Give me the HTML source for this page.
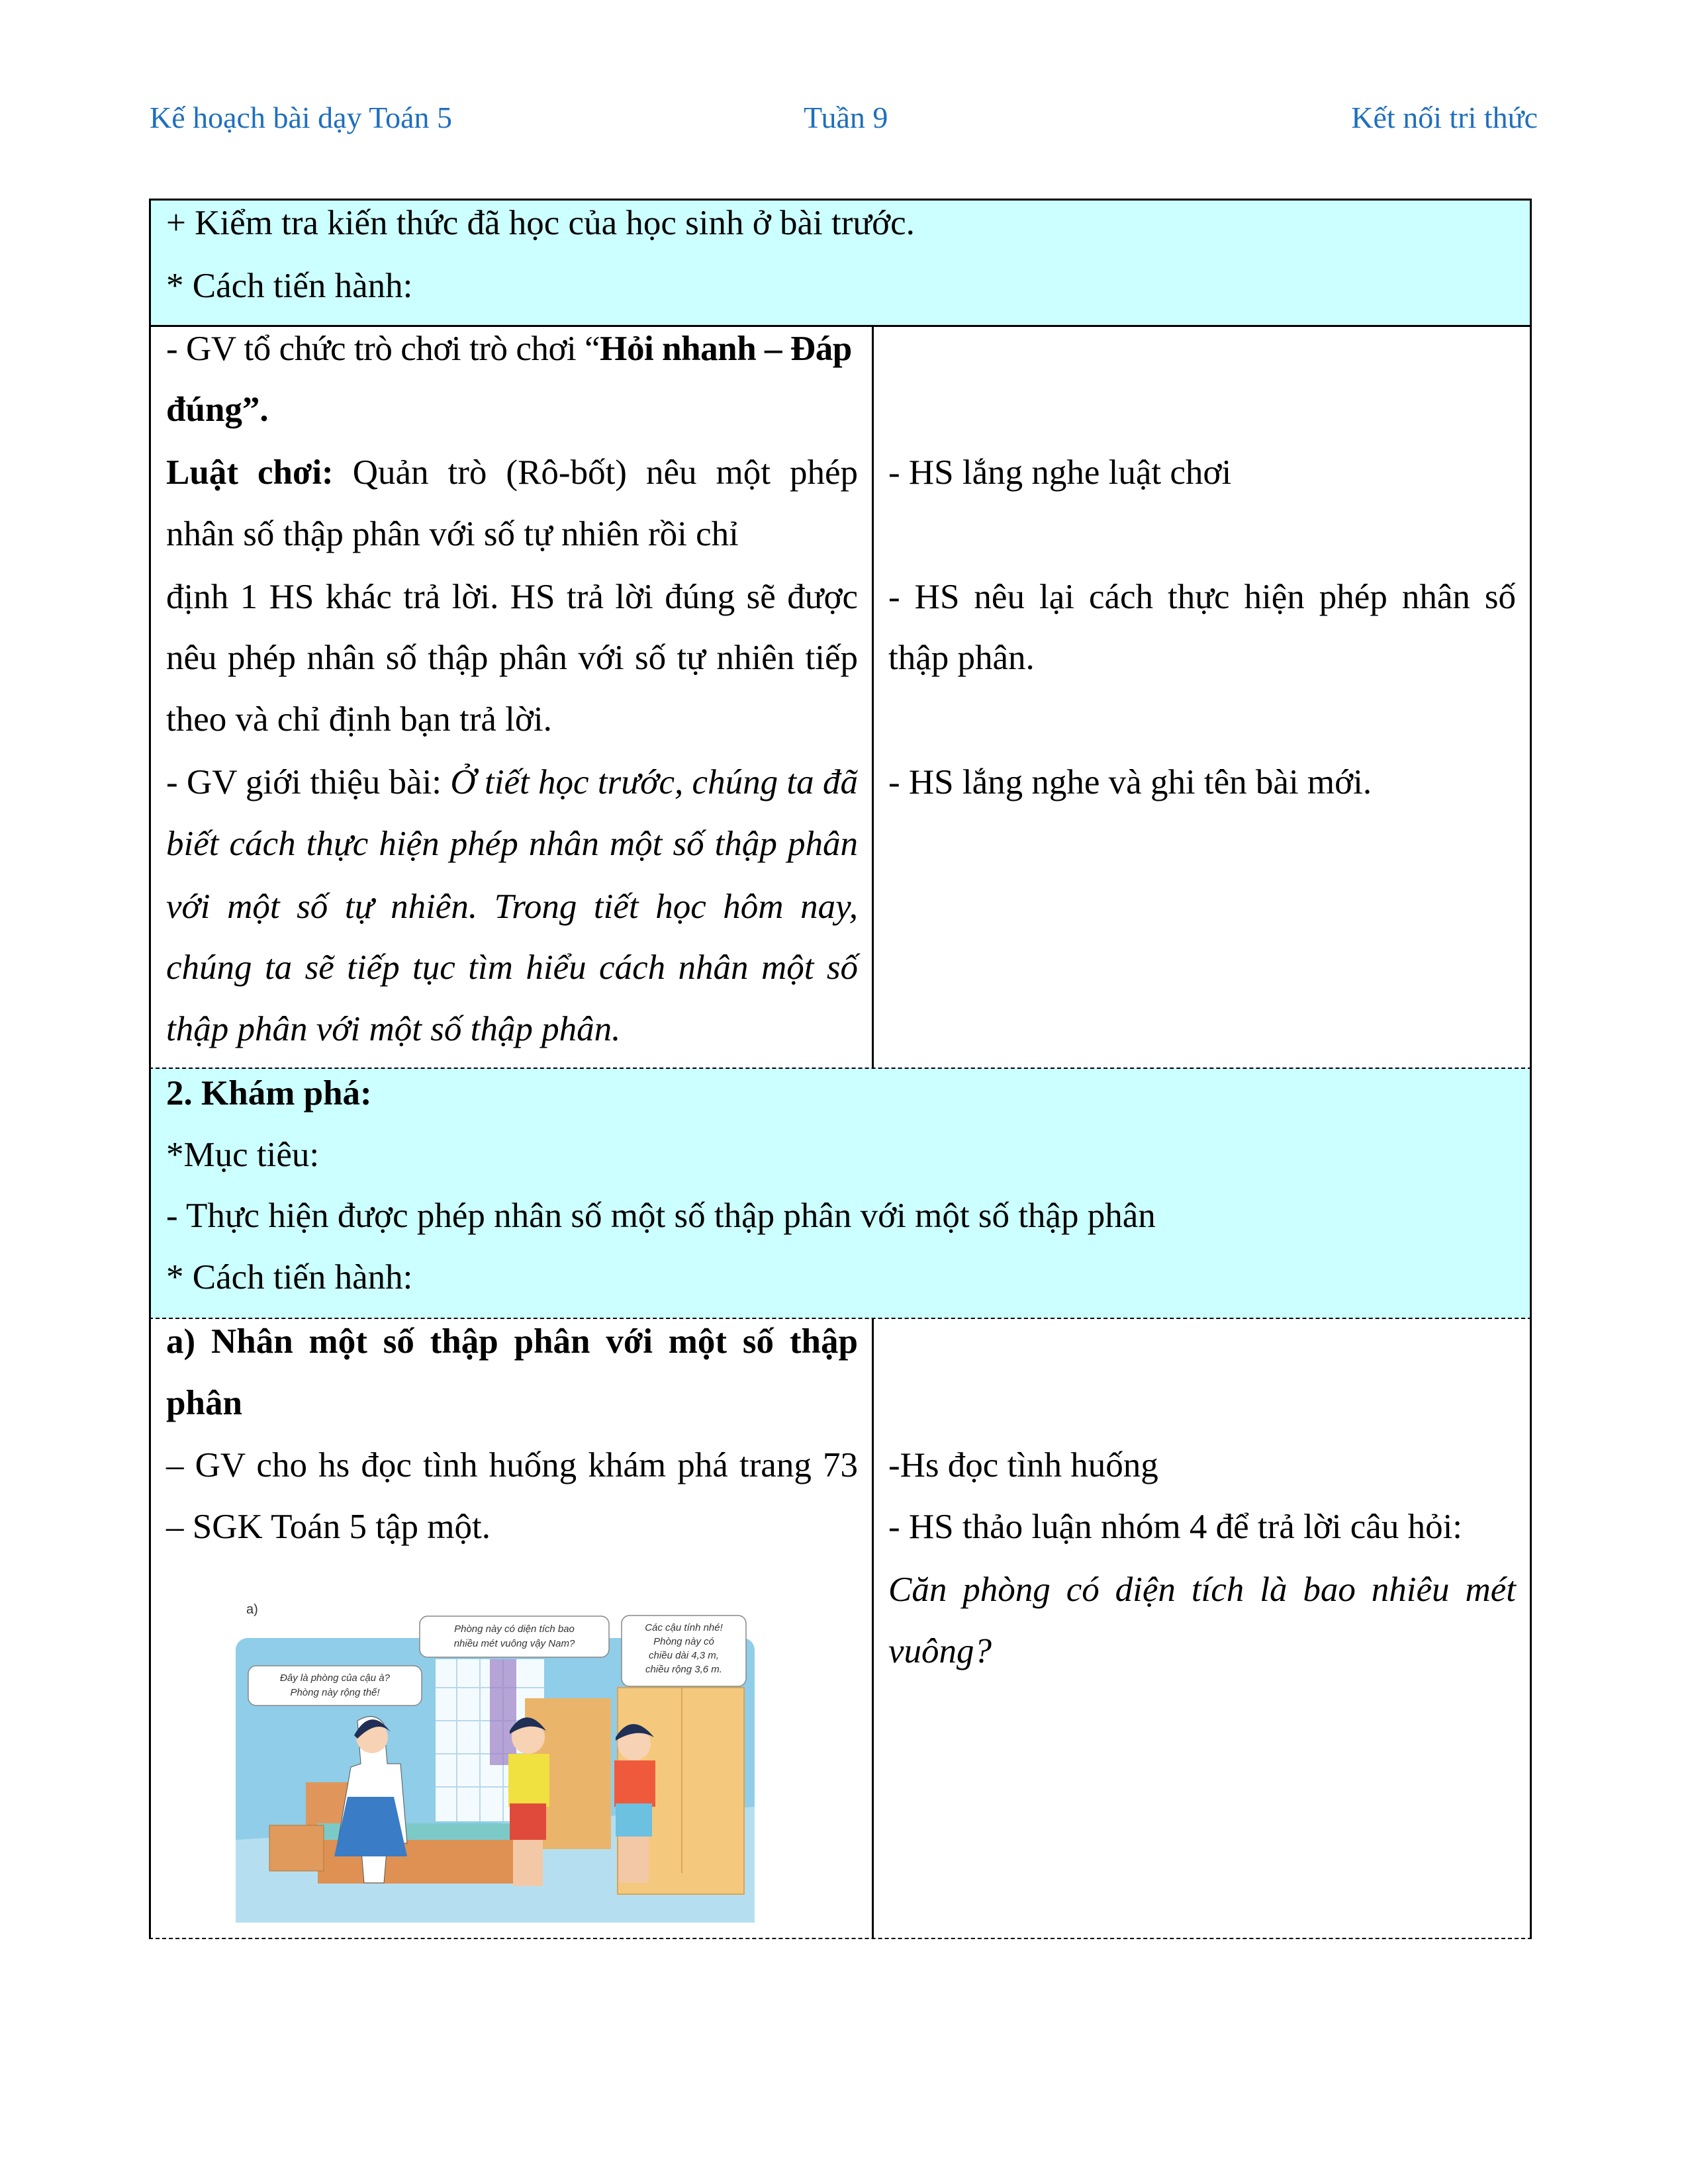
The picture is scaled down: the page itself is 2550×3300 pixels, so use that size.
<!DOCTYPE html>
<html><head><meta charset="utf-8">
<style>
html,body{margin:0;padding:0;background:#fff;}
body{width:2550px;height:3300px;position:relative;overflow:hidden;font-family:"Liberation Serif","Noto Serif CJK SC",serif;color:#000;}
.h{position:absolute;top:148px;font-size:46px;color:#1f6fbd;line-height:60px;white-space:nowrap;}
.bg{position:absolute;background:#ccffff;}
.hl{position:absolute;height:0;}
.vl{position:absolute;width:3px;background:#000;}
.l{position:absolute;font-size:53px;line-height:94px;height:94px;white-space:nowrap;}
.j{text-align:justify;text-align-last:justify;white-space:normal;}
.L{left:251px;width:1045px;}
.R{left:1342px;width:948px;}
b{font-weight:bold;}
</style></head><body>
<div class="h" style="left:226px">Kế hoạch bài dạy Toán 5</div>
<div class="h" style="left:1214px">Tuần 9</div>
<div class="h" style="right:227px">Kết nối tri thức</div>

<div class="bg" style="left:226px;top:301px;width:2086px;height:191px"></div>
<div class="bg" style="left:226px;top:1614px;width:2086px;height:378px"></div>

<div class="hl" style="left:225px;top:300px;width:2089px;border-top:3px solid #000"></div>
<div class="hl" style="left:225px;top:491px;width:2089px;border-top:3px solid #000"></div>
<div class="hl" style="left:225px;top:1613px;width:2089px;border-top:2px dashed #000"></div>
<div class="hl" style="left:225px;top:1991px;width:2089px;border-top:2px dashed #000"></div>
<div class="hl" style="left:225px;top:2928px;width:2089px;border-top:2px dashed #000"></div>
<div class="vl" style="left:225px;top:300px;height:2630px"></div>
<div class="vl" style="left:2311px;top:300px;height:2630px"></div>
<div class="vl" style="left:1317px;top:492px;height:1122px"></div>
<div class="vl" style="left:1317px;top:1992px;height:938px"></div>

<div class="l L" style="top:290px">+ Kiểm tra kiến thức đã học của học sinh ở bài trước.</div>
<div class="l L" style="top:385px">* Cách tiến hành:</div>
<div class="l L" style="top:480px;letter-spacing:-0.45px">- GV tổ chức trò chơi trò chơi “<b>Hỏi nhanh – Đáp</b></div>
<div class="l L" style="top:572px"><b>đúng”.</b></div>
<div class="l L j" style="top:667px"><b>Luật chơi:</b> Quản trò (Rô-bốt) nêu một phép</div>
<div class="l L" style="top:760px">nhân số thập phân với số tự nhiên rồi chỉ</div>
<div class="l L j" style="top:855px">định 1 HS khác trả lời. HS trả lời đúng sẽ được</div>
<div class="l L j" style="top:947px">nêu phép nhân số thập phân với số tự nhiên tiếp</div>
<div class="l L" style="top:1040px">theo và chỉ định bạn trả lời.</div>
<div class="l L j" style="top:1135px">- GV giới thiệu bài: <i>Ở tiết học trước, chúng ta đã</i></div>
<div class="l L j" style="top:1228px"><i>biết cách thực hiện phép nhân một số thập phân</i></div>
<div class="l L j" style="top:1323px"><i>với một số tự nhiên. Trong tiết học hôm nay,</i></div>
<div class="l L j" style="top:1415px"><i>chúng ta sẽ tiếp tục tìm hiểu cách nhân một số</i></div>
<div class="l L" style="top:1508px"><i>thập phân với một số thập phân.</i></div>

<div class="l R" style="top:667px">- HS lắng nghe luật chơi</div>
<div class="l R j" style="top:855px">- HS nêu lại cách thực hiện phép nhân số</div>
<div class="l R" style="top:947px">thập phân.</div>
<div class="l R" style="top:1135px">- HS lắng nghe và ghi tên bài mới.</div>

<div class="l L" style="top:1605px"><b>2. Khám phá:</b></div>
<div class="l L" style="top:1698px">*Mục tiêu:</div>
<div class="l L" style="top:1790px">- Thực hiện được phép nhân số một số thập phân với một số thập phân</div>
<div class="l L" style="top:1883px">* Cách tiến hành:</div>

<div class="l L j" style="top:1980px"><b>a) Nhân một số thập phân với một số thập</b></div>
<div class="l L" style="top:2073px"><b>phân</b></div>
<div class="l L j" style="top:2167px">– GV cho hs đọc tình huống khám phá trang 73</div>
<div class="l L" style="top:2260px">– SGK Toán 5 tập một.</div>

<div class="l R" style="top:2167px">-Hs đọc tình huống</div>
<div class="l R" style="top:2260px">- HS thảo luận nhóm 4 để trả lời câu hỏi:</div>
<div class="l R j" style="top:2355px"><i>Căn phòng có diện tích là bao nhiêu mét</i></div>
<div class="l R" style="top:2448px"><i>vuông?</i></div>

<svg style="position:absolute;left:330px;top:2400px" width="830" height="510" viewBox="0 0 830 510" preserveAspectRatio="none">
<rect x="26" y="75" width="784" height="430" rx="18" fill="#8fcde8"/>
<polygon points="26,380 810,330 810,505 26,505" fill="#b5dff0"/>
<text x="42" y="38" font-family="Liberation Sans,sans-serif" font-size="20" fill="#333">a)</text>
<rect x="328" y="107" width="164" height="245" fill="#f4fbff"/>
<g stroke="#b8d8ea" stroke-width="2"><line x1="360" y1="107" x2="360" y2="352"/><line x1="395" y1="107" x2="395" y2="352"/><line x1="430" y1="107" x2="430" y2="352"/><line x1="328" y1="150" x2="492" y2="150"/><line x1="328" y1="200" x2="492" y2="200"/><line x1="328" y1="250" x2="492" y2="250"/><line x1="328" y1="300" x2="492" y2="300"/></g>
<rect x="410" y="107" width="40" height="160" fill="#9b7fc4" opacity="0.7"/>
<rect x="463" y="166" width="130" height="228" fill="#eab46b"/>
<rect x="603" y="150" width="191" height="312" fill="#f5c97d" stroke="#d9a557" stroke-width="2"/>
<line x1="700" y1="150" x2="700" y2="430" stroke="#d9a557" stroke-width="2"/>
<rect x="132" y="293" width="120" height="70" fill="#e0965a"/>
<polygon points="150,355 440,355 445,380 135,395" fill="#7ccac8"/>
<rect x="150" y="380" width="295" height="66" fill="#de9152"/>
<rect x="77" y="358" width="82" height="69" fill="#e09a5c" stroke="#b8733a"/>
<path d="M210 200 q25 -15 40 5 l5 60 l20 0 l10 120 l-30 0 l-5 60 l-30 0 l-5 -60 l-35 0 l20 -115 l15 -5 z" fill="#fff" stroke="#555"/>
<path d="M195 315 l70 0 l20 90 l-110 0 z" fill="#3a7cc6"/>
<circle cx="232" cy="225" r="24" fill="#f7d2b4"/><path d="M205 222 q25 -45 55 -5 q-20 -20 -50 10 z" fill="#1f2f55"/>
<circle cx="468" cy="225" r="25" fill="#f7d2b4"/><path d="M440 215 q25 -40 55 0 q-25 -15 -55 5z" fill="#1f2f55"/>
<rect x="438" y="250" width="62" height="80" fill="#f0e040"/>
<rect x="440" y="325" width="55" height="55" fill="#e04a3a"/>
<rect x="445" y="380" width="45" height="70" fill="#f3c8a6"/>
<circle cx="628" cy="235" r="25" fill="#f7d2b4"/><path d="M600 225 q25 -40 58 0 q-25 -15 -58 5z" fill="#1f2f55"/>
<rect x="598" y="260" width="62" height="70" fill="#f05a3c"/>
<rect x="600" y="325" width="55" height="50" fill="#6cc0e0"/>
<rect x="605" y="375" width="45" height="70" fill="#f3c8a6"/>
<g fill="#fff" stroke="#888" stroke-width="1.5">
<rect x="45" y="117" width="262" height="60" rx="12"/>
<rect x="304" y="42" width="286" height="62" rx="12"/>
<rect x="609" y="41" width="188" height="107" rx="12"/>
</g>
<g font-family="Liberation Sans,sans-serif" font-style="italic" font-size="15" fill="#333" text-anchor="middle">
<text x="176" y="140">Đây là phòng của cậu à?</text><text x="176" y="162">Phòng này rộng thế!</text>
<text x="447" y="66">Phòng này có diện tích bao</text><text x="447" y="88">nhiều mét vuông vậy Nam?</text>
<text x="703" y="64">Các cậu tính nhé!</text><text x="703" y="85">Phòng này có</text><text x="703" y="106">chiều dài 4,3 m,</text><text x="703" y="127">chiều rộng 3,6 m.</text>
</g>
</svg>
</body></html>
